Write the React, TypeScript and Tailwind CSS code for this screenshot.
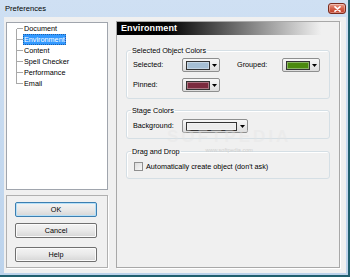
import React from 'react';

const TREE_ITEMS = ['Document', 'Environment', 'Content', 'Spell Checker', 'Performance', 'Email'];

const Arrow = () => (
  <svg width="5" height="3" viewBox="0 0 5 3">
    <path d="M0 0h5L2.5 3z" fill="#000" />
  </svg>
);

const ColorPick = ({ color, wide = false }: { color: string; wide?: boolean }) => (
  <div
    className={`${wide ? 'w-[66px]' : 'w-[38px]'} h-[14px] flex items-center pl-[3px] rounded-[2px] border border-[#8e8f8f] bg-gradient-to-b from-[#f7f7f7] to-[#dcdcdc]`}
  >
    <div
      className={`${wide ? 'w-[51px]' : 'w-[24px]'} h-[9px] border border-[#333333] shadow-[inset_0_0_0_1px_rgba(255,255,255,0.35)]`}
      style={{ backgroundColor: color }}
    />
    <div className="flex-1 flex justify-center">
      <Arrow />
    </div>
  </div>
);

const WinButton = ({ label, primary = false }: { label: string; primary?: boolean }) => (
  <button
    className={`w-[82px] h-[15px] rounded-[2px] border text-[7.25px] leading-none text-black flex items-center justify-center bg-gradient-to-b from-[#f4f4f4] via-[#e9e9e9] to-[#d6d6d6] ${
      primary ? 'border-[#3c7fb1] shadow-[inset_0_0_0_1px_#b6e0f8]' : 'border-[#707070] shadow-[inset_0_0_0_1px_#fbfbfb]'
    }`}
  >
    {label}
  </button>
);

const Group = ({ title, className, children }: { title: string; className?: string; children: React.ReactNode }) => (
  <fieldset className={`border border-[#d5dfe5] rounded-[3px] shadow-[inset_1px_1px_0_#fff] ${className ?? ''}`}>
    <legend className="ml-[4px] px-[1px] leading-[9px]">{title}</legend>
    {children}
  </fieldset>
);

export default function App() {
  return (
    <div className="w-[350px] h-[277px] flex flex-col bg-gradient-to-b from-[#cfe0f3] to-[#bcd3ec] border-r-2 border-b-2 border-[#21606f] font-['Liberation_Sans',Arial,sans-serif] text-[7.25px] text-black overflow-hidden relative">
      {/* Title bar */}
      <div className="h-[17px] shrink-0 flex items-center justify-between pl-[5px] pr-[2px]">
        <span className="text-[7.6px] leading-none text-black">Preferences</span>
        <div className="w-[18px] h-[11px] rounded-[3px] border border-[#7a2a1c] bg-gradient-to-b from-[#e8a08e] via-[#d4624b] to-[#c13a22] flex items-center justify-center shadow-[inset_0_0_0_1px_rgba(255,255,255,0.35)]">
          <svg width="7" height="6" viewBox="0 0 7 6">
            <path d="M1 0.8L6 5.2M6 0.8L1 5.2" stroke="#fff" strokeWidth="1.6" strokeLinecap="round" />
          </svg>
        </div>
      </div>

      {/* Body */}
      <div className="flex-1 ml-[4px] mr-[2px] mb-[2px] bg-[#f0f0f0] flex gap-[8px] pt-[4px] pl-[2px] pr-[6px] pb-[5px]">
        {/* Left column */}
        <div className="w-[102px] flex flex-col gap-[5px] pt-[1px]">
          <div className="flex-1 bg-white border border-[#a0a5ad] flex">
            <div className="w-[9px]" />
            <svg width="7" height="66" viewBox="0 0 7 66" className="shrink-0" shapeRendering="crispEdges">
              <path
                d="M0.5 5.5V60.5M0.5 5.5H7M0.5 16.5H7M0.5 27.5H7M0.5 38.5H7M0.5 49.5H7M0.5 60.5H7"
                stroke="#a8a8a8"
                strokeWidth="1"
                fill="none"
              />
            </svg>
            <div className="flex flex-col items-start">
              {TREE_ITEMS.map((item) => (
                <div
                  key={item}
                  className={`h-[11px] leading-[11px] px-[1px] whitespace-nowrap ${
                    item === 'Environment' ? 'bg-[#3399ff] text-white outline-1 outline-dotted outline-[#1f5fa8] -outline-offset-1' : ''
                  }`}
                >
                  {item}
                </div>
              ))}
            </div>
          </div>
          <div className="h-[73px] shrink-0 border border-[#b0b0b0] shadow-[1px_1px_0_#fff] flex flex-col items-center pt-[6px] pr-[2px]">
            <WinButton label="OK" primary />
            <div className="h-[6px]" />
            <WinButton label="Cancel" />
            <div className="h-[9px]" />
            <WinButton label="Help" />
          </div>
        </div>

        {/* Right panel */}
        <div className="flex-1 border border-[#a8a8a8] shadow-[1px_1px_0_#fff] flex flex-col">
          <div className="h-[13px] shrink-0 bg-[linear-gradient(to_right,#000_0%,#000_22%,#f0f0f0_92%)] flex items-center pl-[4px]">
            <span className="text-[9px] font-bold leading-none text-white tracking-[0.1px]">Environment</span>
          </div>

          <div className="flex flex-col px-[9px] relative">
            <Group title="Selected Object Colors" className="mt-[11px]">
              <div className="flex flex-col gap-[6px] pl-[6px] pt-[3px] pb-[6px]">
                <div className="flex items-center">
                  <span className="w-[49px]">Selected:</span>
                  <ColorPick color="#a6bfd4" />
                  <span className="w-[45px] ml-[17px]">Grouped:</span>
                  <ColorPick color="#4b8a0e" />
                </div>
                <div className="flex items-center">
                  <span className="w-[49px]">Pinned:</span>
                  <ColorPick color="#7b2b3e" />
                </div>
              </div>
            </Group>

            <Group title="Stage Colors" className="mt-[7px]">
              <div className="flex items-center pl-[6px] pt-[4px] pb-[5px]">
                <span className="w-[49px]">Background:</span>
                <ColorPick color="#ececec" wide />
              </div>
            </Group>

            <Group title="Drag and Drop" className="mt-[8px]">
              <div className="flex items-center gap-[3px] pl-[7px] pt-[5px] pb-[6px] h-[22px]">
                <div className="w-[9px] h-[9px] border border-[#8f8f8f] bg-gradient-to-br from-[#dcdcdc] to-[#f8f8f8]" />
                <span className="leading-[11px]">Automatically create object (don't ask)</span>
              </div>
            </Group>

            {/* watermark */}
            <div className="absolute left-[50px] top-[93px] pointer-events-none flex flex-col items-center">
              <span className="text-[17px] font-bold tracking-[3px] leading-none text-[#e4e4e4]/40">SOFTPEDIA</span>
              <span className="text-[5.5px] leading-none text-[#cfcfcf] mt-[3px]">www.softpedia.com</span>
            </div>
          </div>
        </div>
      </div>
    </div>
  );
}
